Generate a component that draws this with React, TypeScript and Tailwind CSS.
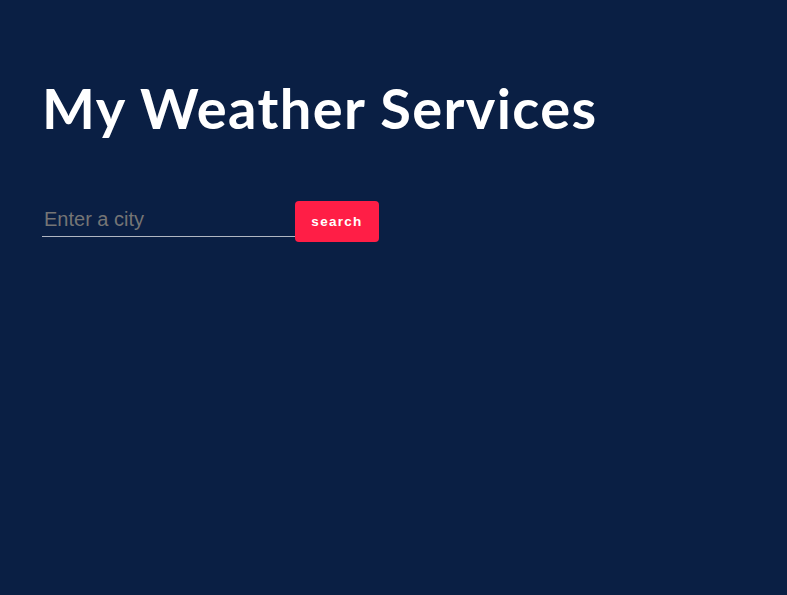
export default function App() {
  return (
    <div className="min-h-[595px] w-full bg-[#0a1f44] px-[42px] pt-[76px]">
      <h1 className="font-['Lato',_'Noto_Sans',_sans-serif] text-[56px] font-bold leading-[64px] tracking-[1.4px] text-white">
        My Weather Services
      </h1>
      <div className="mt-[61px] flex items-start">
        <input
          type="text"
          placeholder="Enter a city"
          className="h-[36px] w-[253px] border-b border-[#b0b6c2] bg-transparent pl-[2px] pt-[1px] font-['Liberation_Sans',_Arial,_sans-serif] text-[20px] text-white outline-none placeholder:text-[#757575]"
        />
        <button className="h-[41px] w-[84px] rounded-[4px] bg-[#ff1e46] pt-[1px] font-['Liberation_Sans',_Arial,_sans-serif] text-[13.5px] font-bold tracking-[1.3px] text-white">
          search
        </button>
      </div>
    </div>
  );
}
